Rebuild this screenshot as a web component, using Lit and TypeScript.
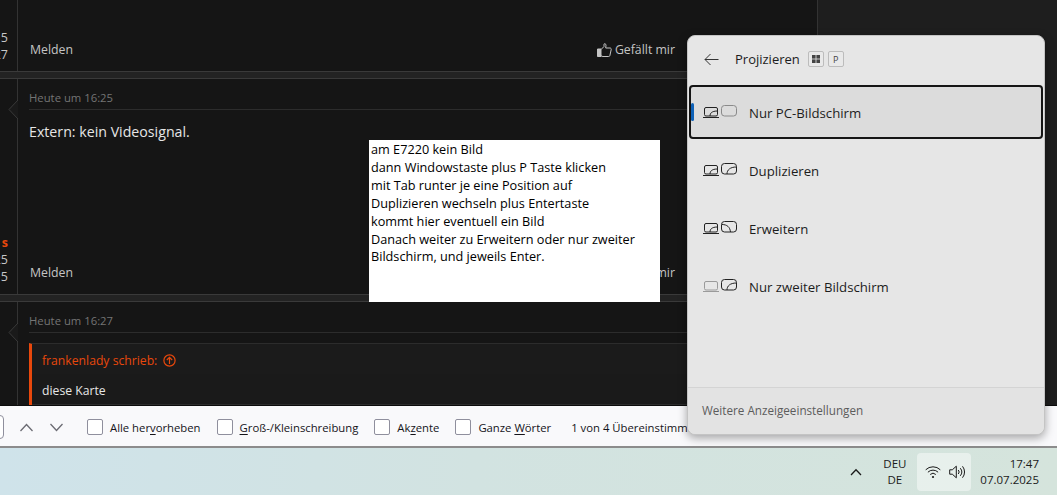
import { LitElement, html, css, svg } from "lit";
import { customElement } from "lit/decorators.js";

const rows = [
  { label: "Nur PC-Bildschirm", sel: true, lap: true, mon: "" },
  { label: "Duplizieren", sel: false, lap: true, mon: "M25 13C25 9 28 6 34.5 6" },
  { label: "Erweitern", sel: false, lap: true, mon: "M20 5.5C25 5.5 28 8 28.5 13" },
  { label: "Nur zweiter Bildschirm", sel: false, lap: false, mon: "M25 13C25 9 28 6 34.5 6" },
];

const modeIcon = (lap: boolean, mon: string) => html`<svg class="mode" width="36" height="18" viewBox="0 0 36 18" fill="none">
  <g stroke=${lap ? "#222" : "#9a9a9a"} stroke-width="1">
    <rect x="2.5" y="4.5" width="13" height="8.5" rx="1.5"/>
    <path d="M1 14.5h16"/>
    ${lap ? svg`<path d="M8 13C8 10 10 8.2 15 8"/>` : ""}
  </g>
  <g stroke=${mon ? "#222" : "#8a8a8a"} stroke-width="1">
    <rect x="19.5" y="2.5" width="15" height="10.5" rx="3"/>
    ${mon ? svg`<path d=${mon}/>` : ""}
  </g>
</svg>`;

const notch = html`<svg class="notch" width="10" height="20" viewBox="0 0 10 20"><path d="M10 0 L1 9.5 L10 19" fill="#1a1a1a" stroke="#3a3a3a"/></svg>`;

@customElement("app-root")
export class AppRoot extends LitElement {
  static styles = css`
    :host { display: block; width: 1057px; height: 495px; position: relative; overflow: hidden;
      font-family: "Open Sans", "Noto Sans", sans-serif; }
    .page { display: flex; flex-direction: column; height: 495px; }
    .forum { height: 405px; flex: none; display: flex; background: #1e1e1e; border-bottom: 1px solid #0c0c0c; overflow: hidden; }
    .thread { width: 818px; box-sizing: border-box; flex: none; display: flex; flex-direction: column; border-right: 1px solid #333; background: #151515; }
    .sep { height: 6px; flex: none; background: #232323; border-top: 1px solid #3a3a3a; border-bottom: 1px solid #3a3a3a; }
    .post { display: flex; flex: none; }
    .p1 { height: 71px; } .p2 { height: 215px; } .p3 { flex: 1; min-height: 0; }
    .side { width: 18px; flex: none; box-sizing: border-box; border-right: 1px solid #333; position: relative;
      display: flex; flex-direction: column; align-items: flex-end; padding-right: 9px; font-size: 12.5px; line-height: 17px; color: #c8c8c8; overflow: visible; }
    .side.s1 { padding-top: 29px; }
    .side.s2 { padding-top: 155px; }
    .side span { display: block; white-space: nowrap; }
    .side .hl { color: #e8480c; font-weight: 700; }
    .notch { position: absolute; right: -1px; top: 21px; }
    .body { flex: 1; min-width: 0; padding: 0 0 0 11px; display: flex; flex-direction: column; }
    .date { font-size: 11.3px; color: #747474; height: 31px; line-height: 38px; box-sizing: border-box; border-bottom: 1px solid #2c2c2c; }
    .text { font-size: 14.2px; color: #e6e6e6; margin-top: 12px; }
    .foot { margin-top: auto; display: flex; justify-content: space-between; align-items: center; padding: 0 142px 13px 1px; font-size: 12.3px; color: #c4c4c4; }
    .like { display: flex; align-items: center; gap: 3px; }
    .quote { margin-top: 10px; border-left: 3px solid #e8480c; border-top: 1px solid #2c2c2c; flex: 1; min-height: 0; background: #161616; }
    .qh { height: 30px; box-sizing: border-box; display: flex; align-items: center; gap: 6px; padding: 2px 0 0 10px; font-size: 12.2px; color: #e8480c; background: #1b1b1b; }
    .qb { height: 31px; box-sizing: border-box; display: flex; align-items: center; padding: 2px 0 0 10px; font-size: 12.2px; color: #e6e6e6; background: #1a1a1a; border-bottom: 1px solid #2c2c2c; }

    .find { height: 42px; flex: none; box-sizing: border-box; padding-top: 2px; background: #f9f9fb; border-bottom: 2px solid #8c8c8c; display: flex; align-items: center; font-size: 11.3px; color: #15141a; white-space: nowrap; overflow: hidden; }
    .inp { width: 10px; height: 22px; margin-left: -8px; border: 1px solid #8f8f9d; border-radius: 4px; background: #fff; flex: none; }
    .chev { margin-left: 15px; flex: none; }
    .chev + .chev { margin-left: 15px; }
    .check { display: flex; align-items: center; gap: 7px; margin-left: 16px; }
    .check i { width: 14px; height: 14px; border: 1px solid #8f8f9d; border-radius: 2px; background: #fff; display: block; }
    .check.first { margin-left: 23px; }
    .check u { text-underline-offset: 2px; }
    .count { margin-left: 20px; }

    .task { flex: 1; background: linear-gradient(90deg, #cfe3ea 0%, #d2e3e1 45%, #d5e4dc 100%); display: flex; align-items: center; justify-content: flex-end; padding-right: 18px; font-size: 11.5px; color: #1a1a1a; }
    .caret { margin-right: 12px; margin-left: 1px; }
    .lang { text-align: center; line-height: 16px; margin-right: 2px; width: 41px; }
    .tray { width: 54px; height: 38px; box-sizing: border-box; padding-left: 2px; border-radius: 4px; background: rgba(255,255,255,.45); display: flex; align-items: center; justify-content: center; gap: 8px; margin-right: 9px; }
    .clock { text-align: right; line-height: 16px; }

    .note { position: absolute; left: 369px; top: 140px; width: 291px; height: 162px; box-sizing: border-box; background: #fff; color: #000; padding: 1px 2px; font-size: 12.7px; line-height: 17.9px; white-space: pre-line; }

    .panel { position: absolute; left: 687px; top: 35px; width: 358px; height: 400px; box-sizing: border-box; border-radius: 8px; background: #e6e6e6; border: 1px solid #c4c4c4; box-shadow: 0 3px 10px rgba(0,0,0,.35); display: flex; flex-direction: column; color: #1c1c1c; }
    .ph { height: 49px; box-sizing: border-box; padding: 0 0 3px 16px; flex: none; display: flex; align-items: center; font-size: 13px; }
    .ph .t { margin-left: 16px; margin-right: 8px; }
    .key { width: 14px; height: 14px; border: 1px solid #bcbcbc; border-radius: 2px; background: #e9e9e9; display: flex; align-items: center; justify-content: center; margin-right: 4px; font-size: 9px; color: #444; }
    .list { flex: 1; padding: 0 1px; display: flex; flex-direction: column; gap: 4px; }
    .row { height: 54px; box-sizing: border-box; display: flex; align-items: center; position: relative; padding-left: 11px; font-size: 13.2px; border-radius: 4px; border: 2px solid transparent; }
    .row.sel { background: #dcdcdc; border-color: #151515; }
    .row span.lab { margin-top: 2px; }
    .pill { position: absolute; left: 0; top: 16px; width: 3px; height: 18px; border-radius: 2px; background: #0f62b8; }
    .mode { margin-right: 11px; flex: none; }
    .pf { height: 44px; box-sizing: content-box; flex: none; border-top: 1px solid #d4d4d4; background: #e3e3e3; border-radius: 0 0 8px 8px; display: flex; align-items: center; padding: 0 0 2px 14px; font-size: 11.7px; color: #5c5c5c; }
  `;

  render() {
    return html`
      <div class="page">
        <div class="forum">
          <div class="thread">
            <div class="post p1">
              <div class="side s1"><span>5</span><span>27</span></div>
              <div class="body">
                <div class="foot">
                  <span>Melden</span>
                  <span class="like">
                    <svg width="15" height="14" viewBox="0 0 15 14" fill="none" stroke="#c4c4c4"><path d="M0.5 6h3.5v7.5h-3.5z" fill="#c4c4c4"/><path d="M4 6.5 7 3.5V1.2c0-.8 1.9-.8 2 1L8.7 5h4.3c1 0 1.4 .8 1.2 1.6l-1.3 5.9c-.2 .7-.6 1-1.2 1H6c-.8 0-1.3-.3-2-.8"/></svg>
                    Gefällt mir
                  </span>
                </div>
              </div>
            </div>
            <div class="sep"></div>
            <div class="post p2">
              <div class="side s2">${notch}<span class="hl">s</span><span>25</span><span>5</span></div>
              <div class="body">
                <div class="date">Heute um 16:25</div>
                <div class="text">Extern: kein Videosignal.</div>
                <div class="foot"><span>Melden</span><span>Gefällt mir</span></div>
              </div>
            </div>
            <div class="sep"></div>
            <div class="post p3">
              <div class="side">${notch}</div>
              <div class="body">
                <div class="date">Heute um 16:27</div>
                <div class="quote">
                  <div class="qh">frankenlady schrieb:
                    <svg width="13" height="13" viewBox="0 0 13 13" fill="none" stroke="#e8480c" stroke-width="1.2"><circle cx="6.5" cy="6.5" r="5.6"/><path d="M6.5 10V3.5M3.8 6l2.7-2.6L9.2 6"/></svg>
                  </div>
                  <div class="qb">diese Karte</div>
                </div>
              </div>
            </div>
          </div>
        </div>
        <div class="find">
          <div class="inp"></div>
          <svg class="chev" width="15" height="9" viewBox="0 0 15 9" fill="none" stroke="#6b6b72" stroke-width="1.3"><path d="M1.5 8 7.5 1.5l6 6.5"/></svg>
          <svg class="chev" width="15" height="9" viewBox="0 0 15 9" fill="none" stroke="#6b6b72" stroke-width="1.3"><path d="M1.5 1 7.5 7.5l6-6.5"/></svg>
          <label class="check first"><i></i><span>Alle her<u>v</u>orheben</span></label>
          <label class="check"><i></i><span><u>G</u>roß-/Kleinschreibung</span></label>
          <label class="check"><i></i><span>Ak<u>z</u>ente</span></label>
          <label class="check"><i></i><span>Ganze <u>W</u>örter</span></label>
          <span class="count">1 von 4 Übereinstimmungen</span>
        </div>
        <div class="task">
          <svg class="caret" width="12" height="8" viewBox="0 0 12 8" fill="none" stroke="#1a1a1a" stroke-width="1.3"><path d="M1 7 6 1.8 11 7"/></svg>
          <div class="lang">DEU<br/>DE</div>
          <div class="tray">
            <svg width="16" height="14" viewBox="0 0 16 14" fill="none" stroke="#1a1a1a" stroke-width="1"><path d="M.7 4.8a10.4 10.4 0 0 1 14.6 0M2.9 7.2a7.3 7.3 0 0 1 10.2 0M5.2 9.5a4 4 0 0 1 5.6 0"/><circle cx="8" cy="12" r="1.1" fill="#1a1a1a" stroke="none"/></svg>
            <svg width="17" height="14" viewBox="0 0 17 14" fill="none" stroke="#1a1a1a" stroke-width="1"><path d="M.7 4.8h2.6L7.3 1.2v11.6L3.3 9.2H.7z"/><path d="M9.3 5a3 3 0 0 1 0 4M11.3 3.2a6 6 0 0 1 0 7.6M13.5 1.3a9 9 0 0 1 0 11.4"/></svg>
          </div>
          <div class="clock">17:47<br/>07.07.2025</div>
        </div>
      </div>

      <div class="note">am E7220 kein Bild
dann Windowstaste plus P Taste klicken
mit Tab runter je eine Position auf
Duplizieren wechseln plus Entertaste
kommt hier eventuell ein Bild
Danach weiter zu Erweitern oder nur zweiter
Bildschirm, und jeweils Enter.</div>

      <div class="panel">
        <div class="ph">
          <svg width="15" height="13" viewBox="0 0 15 13" fill="none" stroke="#333" stroke-width="1"><path d="M14.5 6.5H1M6.5 1 1 6.5 6.5 12"/></svg>
          <span class="t">Projizieren</span>
          <span class="key"><svg width="8" height="8" viewBox="0 0 8 8" fill="#444"><rect width="3.6" height="3.6"/><rect x="4.4" width="3.6" height="3.6"/><rect y="4.4" width="3.6" height="3.6"/><rect x="4.4" y="4.4" width="3.6" height="3.6"/></svg></span>
          <span class="key">P</span>
        </div>
        <div class="list">
          ${rows.map(r => html`<div class="row ${r.sel ? "sel" : ""}">
            ${r.sel ? html`<span class="pill"></span>` : ""}
            ${modeIcon(r.lap, r.mon)}
            <span class="lab">${r.label}</span>
          </div>`)}
        </div>
        <div class="pf">Weitere Anzeigeeinstellungen</div>
      </div>
    `;
  }
}
